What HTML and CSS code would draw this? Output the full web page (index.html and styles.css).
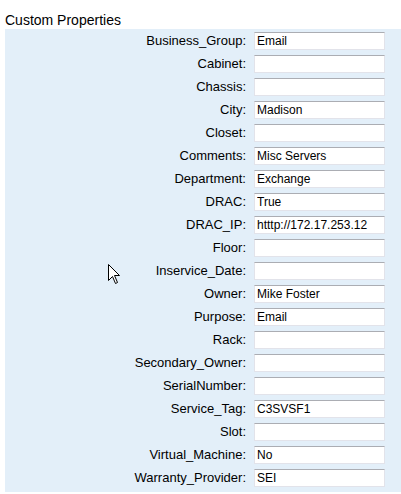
FILE: index.html
```html
<!DOCTYPE html>
<html>
<head>
<meta charset="utf-8">
<link rel="stylesheet" href="styles.css">
</head>
<body>
<div class="title">Custom Properties</div>
<div class="panel">
  <div class="row"><label>Business_Group:</label><input class="field" value="Email"></div>
  <div class="row"><label>Cabinet:</label><input class="field" value=""></div>
  <div class="row"><label>Chassis:</label><input class="field" value=""></div>
  <div class="row"><label>City:</label><input class="field" value="Madison"></div>
  <div class="row"><label>Closet:</label><input class="field" value=""></div>
  <div class="row"><label>Comments:</label><input class="field" value="Misc Servers"></div>
  <div class="row"><label>Department:</label><input class="field" value="Exchange"></div>
  <div class="row"><label>DRAC:</label><input class="field" value="True"></div>
  <div class="row"><label>DRAC_IP:</label><input class="field" value="htttp://172.17.253.12"></div>
  <div class="row"><label>Floor:</label><input class="field" value=""></div>
  <div class="row"><label>Inservice_Date:</label><input class="field" value=""></div>
  <div class="row"><label>Owner:</label><input class="field" value="Mike Foster"></div>
  <div class="row"><label>Purpose:</label><input class="field" value="Email"></div>
  <div class="row"><label>Rack:</label><input class="field" value=""></div>
  <div class="row"><label>Secondary_Owner:</label><input class="field" value=""></div>
  <div class="row"><label>SerialNumber:</label><input class="field" value=""></div>
  <div class="row"><label>Service_Tag:</label><input class="field" value="C3SVSF1"></div>
  <div class="row"><label>Slot:</label><input class="field" value=""></div>
  <div class="row"><label>Virtual_Machine:</label><input class="field" value="No"></div>
  <div class="row"><label>Warranty_Provider:</label><input class="field" value="SEI"></div>
  <svg class="cursor" width="13" height="21" viewBox="0 0 13 21"><path d="M0.5 0.5 L0.5 16.5 L4.5 12.5 L7.5 19.5 L9.5 18.5 L6.5 11.5 L11.5 11.5 Z" fill="#fff" stroke="#000" stroke-width="1" stroke-linejoin="miter"/></svg>
</div>
</body>
</html>
```
FILE: styles.css
```css
html, body {
  margin: 0;
  padding: 0;
  background: #ffffff;
}
body {
  padding: 12px 0 0 5px;
  font-family: "Liberation Sans", Arial, sans-serif;
  color: #000;
  overflow: hidden;
}
.title {
  font-size: 14px;
  line-height: 17px;
  height: 17px;
}
.panel {
  position: relative;
  background: #e3eff9;
  padding-top: 3px;
  width: 400px;
}
.row {
  display: grid;
  grid-template-columns: 241px 131px;
  column-gap: 8px;
  height: 23px;
  align-items: start;
}
.row label {
  text-align: right;
  font-size: 13px;
  line-height: 18px;
  height: 18px;
}
.field {
  box-sizing: border-box;
  width: 131px;
  height: 18px;
  margin: 0;
  padding: 0 0 0 2px;
  font-family: "Liberation Sans", Arial, sans-serif;
  font-size: 12px;
  color: #000;
  background: #fff;
  border: 1px solid #e2e3ea;
  border-top-color: #abadb3;
  outline: none;
}
.cursor {
  position: absolute;
  left: 103px;
  top: 235px;
}
```
